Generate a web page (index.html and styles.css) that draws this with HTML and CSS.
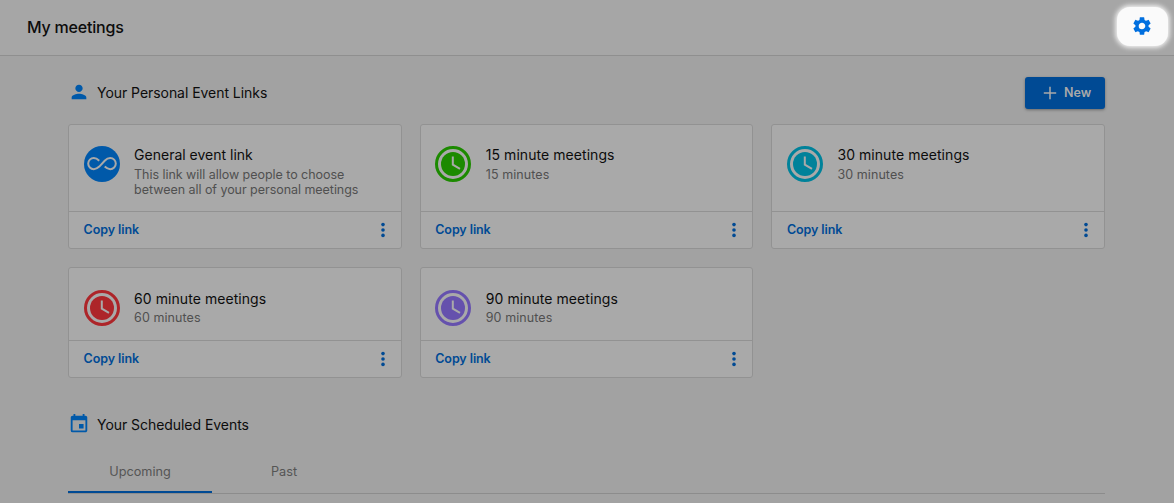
FILE: index.html
```html
<!DOCTYPE html>
<html lang="en">
<head>
<meta charset="utf-8">
<title>My meetings</title>
<link rel="stylesheet" href="styles.css">
</head>
<body>
<svg class="defs" width="0" height="0">
  <symbol id="clock" viewBox="0 0 36 36">
    <circle cx="18" cy="18" r="16.5" fill="none" stroke="currentColor" stroke-width="3"/>
    <circle cx="18" cy="18" r="12" fill="currentColor"/>
    <path d="M17.8 10.5V18.6L25 22.8" fill="none" stroke="#a9a9a9" stroke-width="2"/>
  </symbol>
  <symbol id="dots" viewBox="0 0 6 16">
    <circle cx="3" cy="2.6" r="1.8"/><circle cx="3" cy="8" r="1.8"/><circle cx="3" cy="13.4" r="1.8"/>
  </symbol>
</svg>
<header class="topbar">
  <h1 class="title">My meetings</h1>
  <button class="settings" aria-label="Settings">
    <svg width="22" height="22" viewBox="0 0 24 24"><path fill="#006fdf" d="M19.14 12.94c.04-.3.06-.61.06-.94 0-.32-.02-.64-.07-.94l2.03-1.58a.49.49 0 0 0 .12-.61l-1.92-3.32a.488.488 0 0 0-.59-.22l-2.39.96c-.5-.38-1.03-.7-1.62-.94l-.36-2.54a.484.484 0 0 0-.48-.41h-3.84c-.24 0-.43.17-.47.41l-.36 2.54c-.59.24-1.13.57-1.62.94l-2.39-.96c-.22-.08-.47 0-.59.22L2.74 8.87c-.12.21-.08.47.12.61l2.03 1.58c-.05.3-.09.63-.09.94s.02.64.07.94l-2.03 1.58a.49.49 0 0 0-.12.61l1.92 3.32c.12.22.37.29.59.22l2.39-.96c.5.38 1.03.7 1.62.94l.36 2.54c.05.24.24.41.48.41h3.84c.24 0 .44-.17.47-.41l.36-2.54c.59-.24 1.13-.56 1.62-.94l2.39.96c.22.08.47 0 .59-.22l1.92-3.32c.12-.22.07-.47-.12-.61l-2.01-1.58zM12 15.6A3.61 3.61 0 0 1 8.4 12c0-1.98 1.62-3.6 3.6-3.6s3.6 1.62 3.6 3.6-1.62 3.6-3.6 3.6z"/></svg>
  </button>
</header>
<main class="content">
  <div class="section-head">
    <svg class="head-icon" width="22" height="22" viewBox="0 0 24 24"><path d="M12 12c2.21 0 4-1.79 4-4s-1.79-4-4-4-4 1.79-4 4 1.79 4 4 4zm0 2c-2.67 0-8 1.34-8 4v2h16v-2c0-2.66-5.33-4-8-4z"/></svg>
    <h2 class="section-title">Your Personal Event Links</h2>
    <button class="new"><svg width="14" height="14" viewBox="0 0 14 14"><path d="M7 .8V13.2M.8 7H13.2" stroke="#a9a9a9" stroke-width="1.5"/></svg><span>New</span></button>
  </div>
  <div class="cards">
    <article class="card">
      <div class="info">
        <svg class="avatar" viewBox="0 0 36 36"><circle cx="18" cy="18" r="18" fill="#0059a9"/><path d="M15.2 14.7C13.5 13 11.9 12 9.8 12a5.6 5.6 0 0 0 0 11.2c2.2 0 3.8-1 5.5-2.6L20.7 14.7C22.4 13 24 12 26.2 12a5.6 5.6 0 0 1 0 11.2c-2.2 0-3.8-1-5.5-2.6" fill="none" stroke="#a9a9a9" stroke-width="2"/></svg>
        <div><h3 class="name general">General event link</h3><p class="desc long">This link will allow people to choose<br>between all of your personal meetings</p></div>
      </div>
      <div class="actions"><a class="copy">Copy link</a><svg class="more"><use href="#dots"/></svg></div>
    </article>
    <article class="card">
      <div class="info"><svg class="avatar green"><use href="#clock"/></svg><div><h3 class="name">15 minute meetings</h3><p class="desc">15 minutes</p></div></div>
      <div class="actions"><a class="copy">Copy link</a><svg class="more"><use href="#dots"/></svg></div>
    </article>
    <article class="card">
      <div class="info"><svg class="avatar teal"><use href="#clock"/></svg><div><h3 class="name">30 minute meetings</h3><p class="desc">30 minutes</p></div></div>
      <div class="actions"><a class="copy">Copy link</a><svg class="more"><use href="#dots"/></svg></div>
    </article>
    <article class="card short">
      <div class="info"><svg class="avatar red"><use href="#clock"/></svg><div><h3 class="name">60 minute meetings</h3><p class="desc">60 minutes</p></div></div>
      <div class="actions"><a class="copy">Copy link</a><svg class="more"><use href="#dots"/></svg></div>
    </article>
    <article class="card short">
      <div class="info"><svg class="avatar purple"><use href="#clock"/></svg><div><h3 class="name">90 minute meetings</h3><p class="desc">90 minutes</p></div></div>
      <div class="actions"><a class="copy">Copy link</a><svg class="more"><use href="#dots"/></svg></div>
    </article>
  </div>
  <div class="section-head events">
    <svg class="head-icon" width="22" height="22" viewBox="0 0 24 24"><path d="M17 12h-5v5h5v-5zM16 1v2H8V1H6v2H5c-1.11 0-1.99.9-1.99 2L3 19a2 2 0 0 0 2 2h14c1.1 0 2-.9 2-2V5c0-1.1-.9-2-2-2h-1V1h-2zm3 18H5V8h14v11z"/></svg>
    <h2 class="section-title">Your Scheduled Events</h2>
  </div>
  <nav class="tabs"><a class="tab active">Upcoming</a><a class="tab">Past</a></nav>
</main>
</body>
</html>
```
FILE: styles.css
```css
* { box-sizing: border-box; }
body { margin: 0; height: 503px; overflow: hidden; background: #a2a2a2; color: #0c0c0c; font-family: Inter, "Liberation Sans", sans-serif; }
h1, h2, h3, p { margin: 0; font-weight: 400; }
button { border: 0; padding: 0; font-family: inherit; }
svg { display: block; flex: none; }
.defs { position: absolute; }
.topbar { height: 56px; display: flex; justify-content: space-between; align-items: flex-start; padding: 7px 6px 0 27px; background: #a6a6a6; border-bottom: 1px solid #8f8f8f; }
.title { font-size: 16px; line-height: 40px; font-weight: 500; letter-spacing: -.2px; }
.settings { width: 51px; height: 39px; border-radius: 13px; background: #fafafa; box-shadow: 0 0 5px 1.5px #fafafa; display: flex; align-items: center; justify-content: center; padding: 0 1px 1px 0; }
.content { width: 1037px; margin-left: 68px; }
.section-head { display: flex; align-items: center; height: 32px; margin-top: 21px; }
.head-icon { fill: #0059a9; margin: 0 7px 2px 0; }
.section-title { font-size: 14px; line-height: 20px; letter-spacing: -.05px; }
.new { margin-left: auto; width: 80px; height: 32px; border-radius: 3px; background: #004a94; color: #a9a9a9; display: flex; align-items: center; padding-left: 18px; gap: 7px; font-size: 12.5px; line-height: 20px; font-weight: 600; box-shadow: 0 1px 3px rgba(0,0,0,.35); }
.new span { margin-bottom: 1px; }
.cards { display: grid; grid-template-columns: repeat(3, 1fr); gap: 18px; margin-top: 15px; }
.card { height: 125px; border: 1px solid #929292; border-radius: 3px; background: #a9a9a9; display: flex; flex-direction: column; }
.info { flex: 1; display: flex; gap: 14.5px; padding: 20px 15px 0 14.6px; }
.avatar { width: 36px; height: 36px; margin-top: 1px; }
.name { font-size: 14px; line-height: 20px; letter-spacing: .06px; }
.general { letter-spacing: 0; }
.desc { font-size: 12.5px; line-height: 15px; color: #505050; margin-top: 2px; letter-spacing: .08px; }
.long { letter-spacing: -.04px; }
.actions { height: 37px; border-top: 1px solid #929292; display: flex; align-items: center; justify-content: space-between; padding: 0 15px 0 14.6px; }
.copy { font-size: 12.5px; line-height: 20px; font-weight: 600; letter-spacing: -.09px; color: #004a94; }
.more { width: 6px; height: 16px; fill: #004a94; }
.short { height: 111px; }
.short .info { padding-top: 21px; }
.short .desc { margin-top: 1px; }
.green { color: #1c8a00; } .teal { color: #00829a; } .red { color: #ad2529; } .purple { color: #6551ad; }
.events { margin-top: 31px; }
.tabs { display: flex; margin-top: 12px; height: 41px; border-bottom: 1px solid #8c8c8c; }
.tab { width: 144px; height: 40px; text-align: center; font-size: 12.7px; line-height: 37px; color: #555; }
.active { border-bottom: 2px solid #004a94; }
```
